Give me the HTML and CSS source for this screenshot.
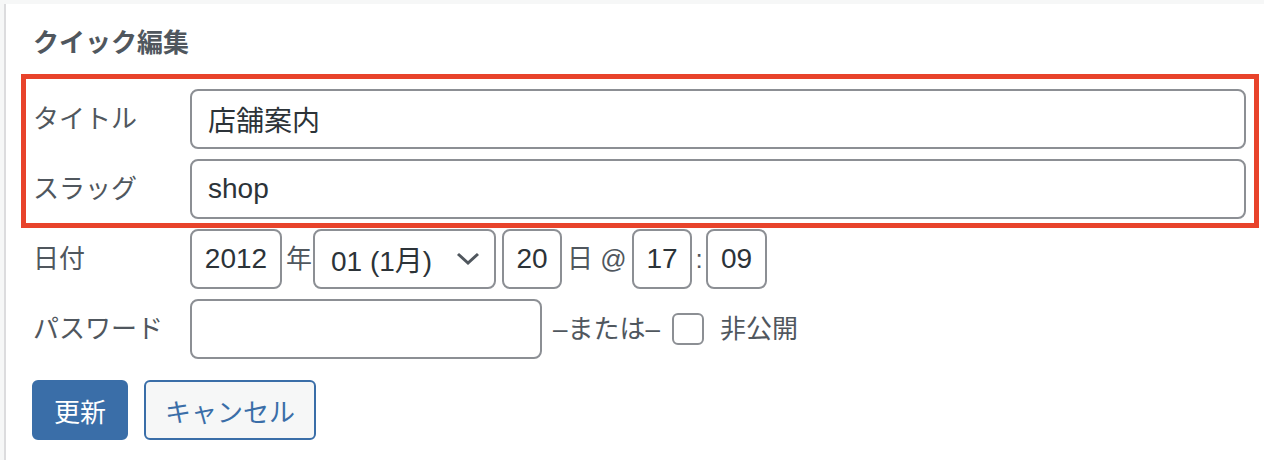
FILE: index.html
```html
<!DOCTYPE html>
<html lang="ja">
<head>
<meta charset="utf-8">
<title>クイック編集</title>
<link rel="stylesheet" href="styles.css">
</head>
<body>
<div class="panel">
  <h2 class="legend">クイック編集</h2>
  <div class="highlight">
    <div class="row">
      <span class="label">タイトル</span>
      <div class="field wide">店舗案内</div>
    </div>
    <div class="row">
      <span class="label">スラッグ</span>
      <div class="field wide">shop</div>
    </div>
  </div>
  <div class="row outer date-row">
    <span class="label">日付</span>
    <div class="field num year">2012</div>
    <span class="unit unit-year">年</span>
    <div class="field select">
      <span>01 (1月)</span>
      <svg class="chev" width="24" height="14" viewBox="0 0 24 14"><path d="M2 2 L12 11 L22 2" fill="none" stroke="#50575e" stroke-width="3"/></svg>
    </div>
    <div class="field num day">20</div>
    <span class="unit unit-day">日 @</span>
    <div class="field num hour">17</div>
    <span class="unit colon">:</span>
    <div class="field num minute">09</div>
  </div>
  <div class="row outer pw-row">
    <span class="label">パスワード</span>
    <div class="field pw"></div>
    <span class="or">–または–</span>
    <span class="checkbox"></span>
    <span class="private">非公開</span>
  </div>
  <div class="actions">
    <button class="btn primary">更新</button>
    <button class="btn secondary">キャンセル</button>
  </div>
</div>
</body>
</html>
```
FILE: styles.css
```css
html, body {
  margin: 0;
  padding: 0;
}
body {
  background: #f6f7f7;
  font-family: "Liberation Sans", "Noto Sans CJK JP", sans-serif;
  color: #50575e;
  height: 460px;
  overflow: hidden;
}
.panel {
  margin: 4px 0 0 4px;
  border-left: 2px solid #dcdcde;
  background: #fff;
  height: 456px;
  padding-top: 21px;
  box-sizing: border-box;
}
.legend {
  margin: 0 0 0 27px;
  font-size: 26px;
  line-height: 36px;
  font-weight: 700;
  color: #50575e;
}
.highlight {
  margin: 13px 5px 0 15px;
  border: 5px solid #e8432b;
  padding: 10px 8px 4px 7px;
  display: flex;
  flex-direction: column;
  gap: 10px;
}
.row {
  display: flex;
  align-items: center;
}
.row.outer {
  padding-left: 27px;
}
.date-row {
  margin-top: 1px;
}
.pw-row {
  margin-top: 10px;
}
.label {
  width: 157px;
  flex: none;
  font-size: 26px;
  line-height: 36px;
  color: #50575e;
}
.field {
  box-sizing: border-box;
  height: 60px;
  border: 2px solid #8c8f94;
  border-radius: 8px;
  background: #fff;
  color: #2c3338;
  font-size: 28px;
  display: flex;
  align-items: center;
  padding: 0 16px;
}
.wide {
  flex: 1;
}
.num {
  justify-content: center;
  padding: 0;
}
.year { width: 92px; }
.day { width: 60px; margin-left: 6px; }
.hour { width: 60px; }
.minute { width: 61px; }
.select {
  width: 183px;
  margin-left: 1px;
  padding-right: 14px;
  justify-content: space-between;
}
.chev {
  display: block;
}
.unit {
  font-size: 26px;
  line-height: 36px;
  color: #50575e;
}
.unit-year {
  margin-left: 4px;
}
.unit-day {
  margin-left: 5px;
  width: 65px;
}
.colon {
  width: 14px;
  text-align: center;
}
.pw {
  width: 352px;
}
.or {
  margin-left: 11px;
  font-size: 26px;
  line-height: 36px;
}
.checkbox {
  box-sizing: border-box;
  width: 32px;
  height: 32px;
  margin-left: 12px;
  border: 2px solid #8c8f94;
  border-radius: 6px;
  background: #fff;
}
.private {
  margin-left: 16px;
  font-size: 26px;
  line-height: 36px;
}
.actions {
  display: flex;
  gap: 16px;
  margin: 21px 0 0 26px;
}
.btn {
  box-sizing: border-box;
  height: 60px;
  border-radius: 6px;
  font-family: "Liberation Sans", "Noto Sans CJK JP", sans-serif;
  font-size: 26px;
  padding: 0;
  cursor: pointer;
}
.primary {
  width: 96px;
  background: #3a6ea8;
  border: 2px solid #3a6ea8;
  color: #fff;
}
.secondary {
  width: 172px;
  background: #f6f7f7;
  border: 2px solid #3a6ea8;
  color: #3a6ea8;
}
```
